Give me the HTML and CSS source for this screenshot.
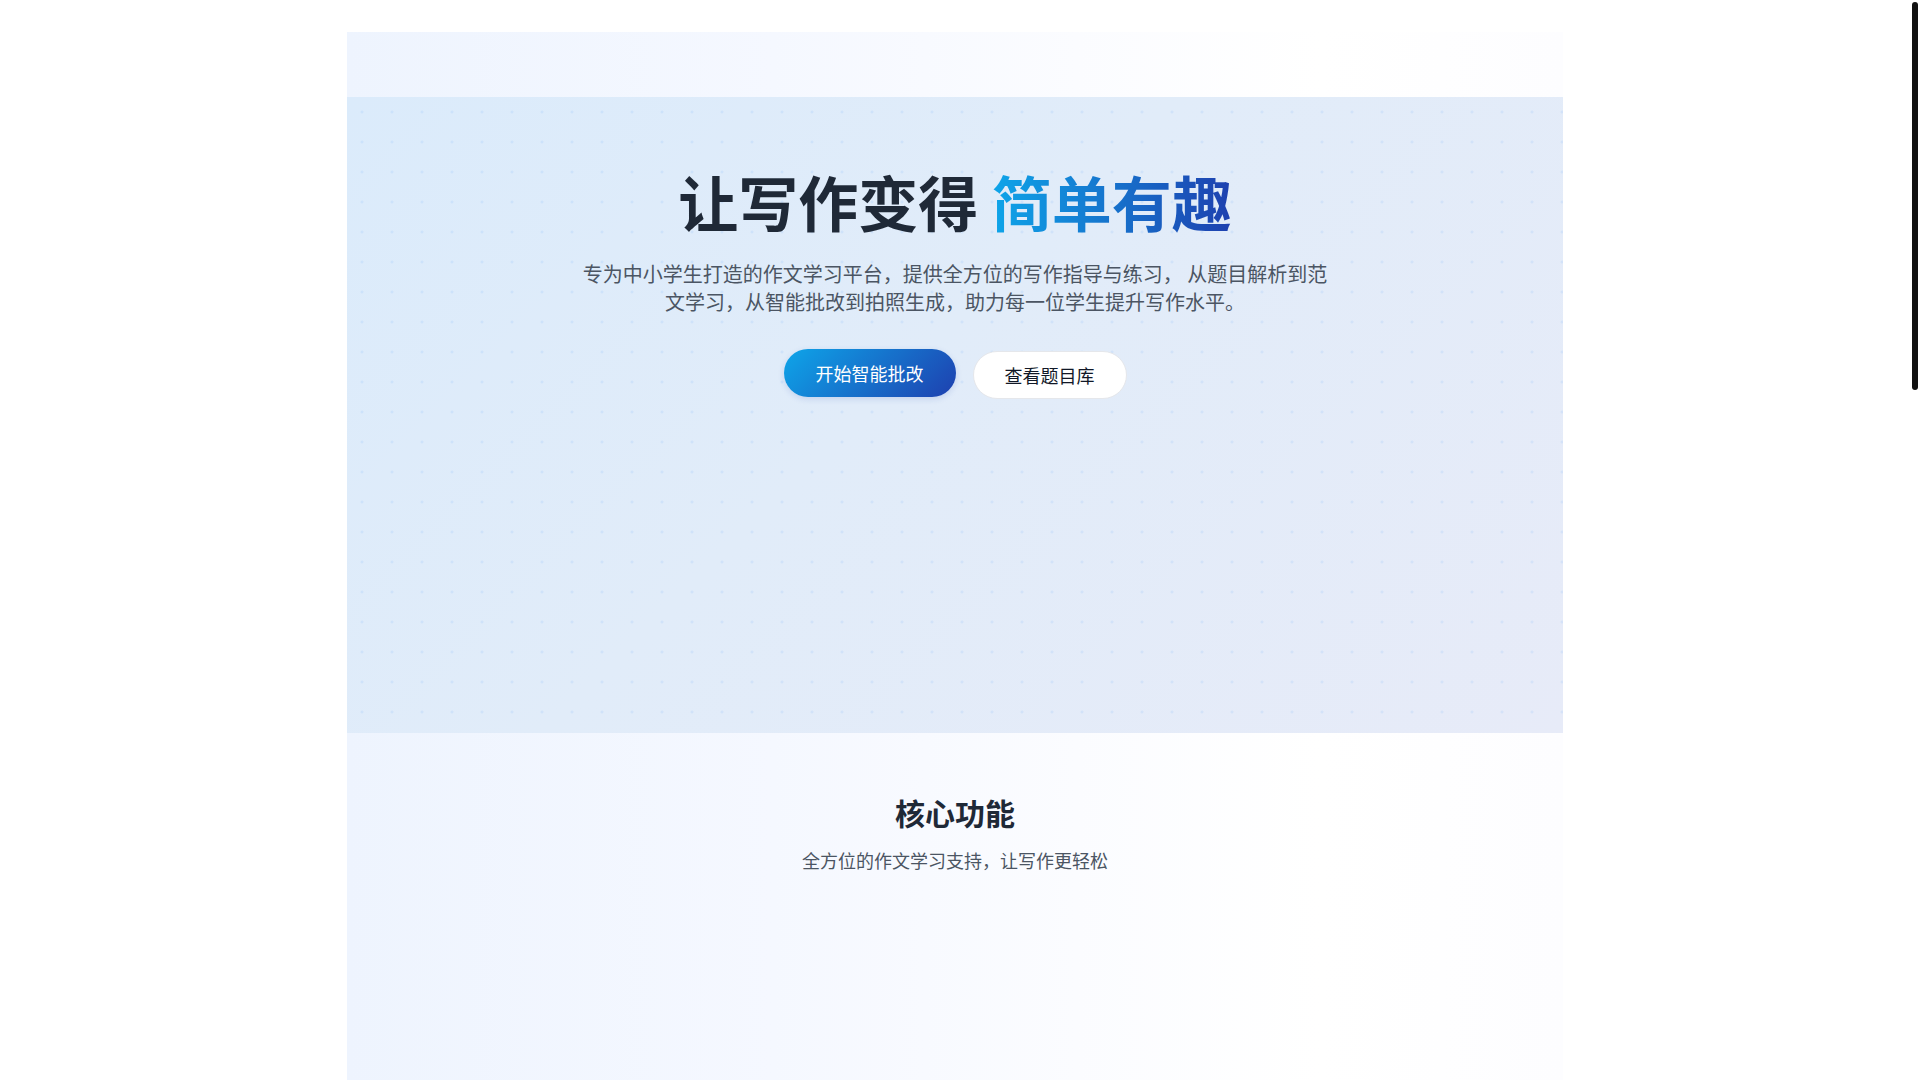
FILE: index.html
```html
<!DOCTYPE html>
<html lang="zh-CN">
<head>
<meta charset="utf-8">
<title>让写作变得简单有趣</title>
<link rel="stylesheet" href="styles.css">
</head>
<body>
<div class="page">
  <div class="container">
    <header class="topbar"></header>
    <section class="hero">
      <h1 class="hero-title">让写作变得 <span class="accent">简单有趣</span></h1>
      <p class="hero-sub">专为中小学生打造的作文学习平台，提供全方位的写作指导与练习， 从题目解析到范文学习，从智能批改到拍照生成，助力每一位学生提升写作水平。</p>
      <div class="hero-actions">
        <a class="btn btn-primary" href="#">开始智能批改</a>
        <a class="btn btn-secondary" href="#">查看题目库</a>
      </div>
    </section>
    <section class="features">
      <h2 class="features-title">核心功能</h2>
      <p class="features-sub">全方位的作文学习支持，让写作更轻松</p>
    </section>
  </div>
</div>
<div class="scrollbar" aria-hidden="true"><div class="scrollbar-thumb"></div></div>
</body>
</html>
```
FILE: styles.css
```css
html {
  background: #ffffff;
}
body {
  margin: 0;
  padding-right: 10px;
  font-family: "Noto Sans CJK SC", "Noto Sans", sans-serif;
  color: #1f2937;
}
.scrollbar {
  position: fixed;
  top: 0;
  right: 0;
  width: 10px;
  height: 100vh;
  background: #ffffff;
}
.scrollbar-thumb {
  margin: 2px 0 0 2px;
  width: 6px;
  height: 388px;
  border-radius: 3px;
  background: #111111;
}
.page {
  padding-top: 32px;
}
.container {
  width: 1216px;
  margin: 0 auto;
  background: linear-gradient(90deg, #eef4fe 0%, #f5f8ff 35%, #fbfcff 60%, #ffffff 80%, #fdfdff 100%);
}
.topbar {
  height: 65px;
}
.hero {
  height: 636px;
  box-sizing: border-box;
  padding-top: 68px;
  text-align: center;
  background-color: #dfecfa;
  background-image:
    radial-gradient(circle at center, rgba(96, 165, 250, 0.13) 0, rgba(96, 165, 250, 0.13) 1.2px, transparent 1.8px),
    linear-gradient(135deg, #dbebfb 0%, #e1ecf9 45%, #e7ebf8 100%);
  background-size: 30px 30px, 100% 100%;
}
.hero-title {
  margin: 0;
  font-size: 60px;
  line-height: 72px;
  font-weight: 700;
  color: #1f2937;
}
.accent {
  background: linear-gradient(90deg, #0ea5e9 0%, #1e40af 100%);
  -webkit-background-clip: text;
  background-clip: text;
  color: transparent;
}
.hero-sub {
  margin: 23px auto 0;
  max-width: 752px;
  font-size: 20px;
  line-height: 28px;
  color: #4b5563;
}
.hero-actions {
  margin-top: 35px;
  display: flex;
  justify-content: center;
  gap: 17px;
}
.btn {
  display: inline-block;
  height: 48px;
  line-height: 48px;
  padding: 0 32px;
  border-radius: 999px;
  font-size: 18px;
  text-decoration: none;
  box-sizing: border-box;
}
.btn-primary {
  color: #ffffff;
  background: linear-gradient(135deg, #0ea5e9 0%, #1e40af 100%);
  transform: translateY(-2px);
  box-shadow: 0 2px 6px rgba(30, 64, 175, 0.15);
}
.btn-secondary {
  color: #111827;
  background: #ffffff;
  border: 1px solid #e5e7eb;
  line-height: 46px;
  padding: 0 31px;
}
.features {
  height: 2243px;
  box-sizing: border-box;
  padding-top: 61px;
  text-align: center;
}
.features-title {
  margin: 0;
  font-size: 30px;
  line-height: 36px;
  font-weight: 700;
  color: #1f2937;
}
.features-sub {
  margin: 16px 0 0;
  font-size: 18px;
  line-height: 28px;
  color: #4b5563;
}
```
